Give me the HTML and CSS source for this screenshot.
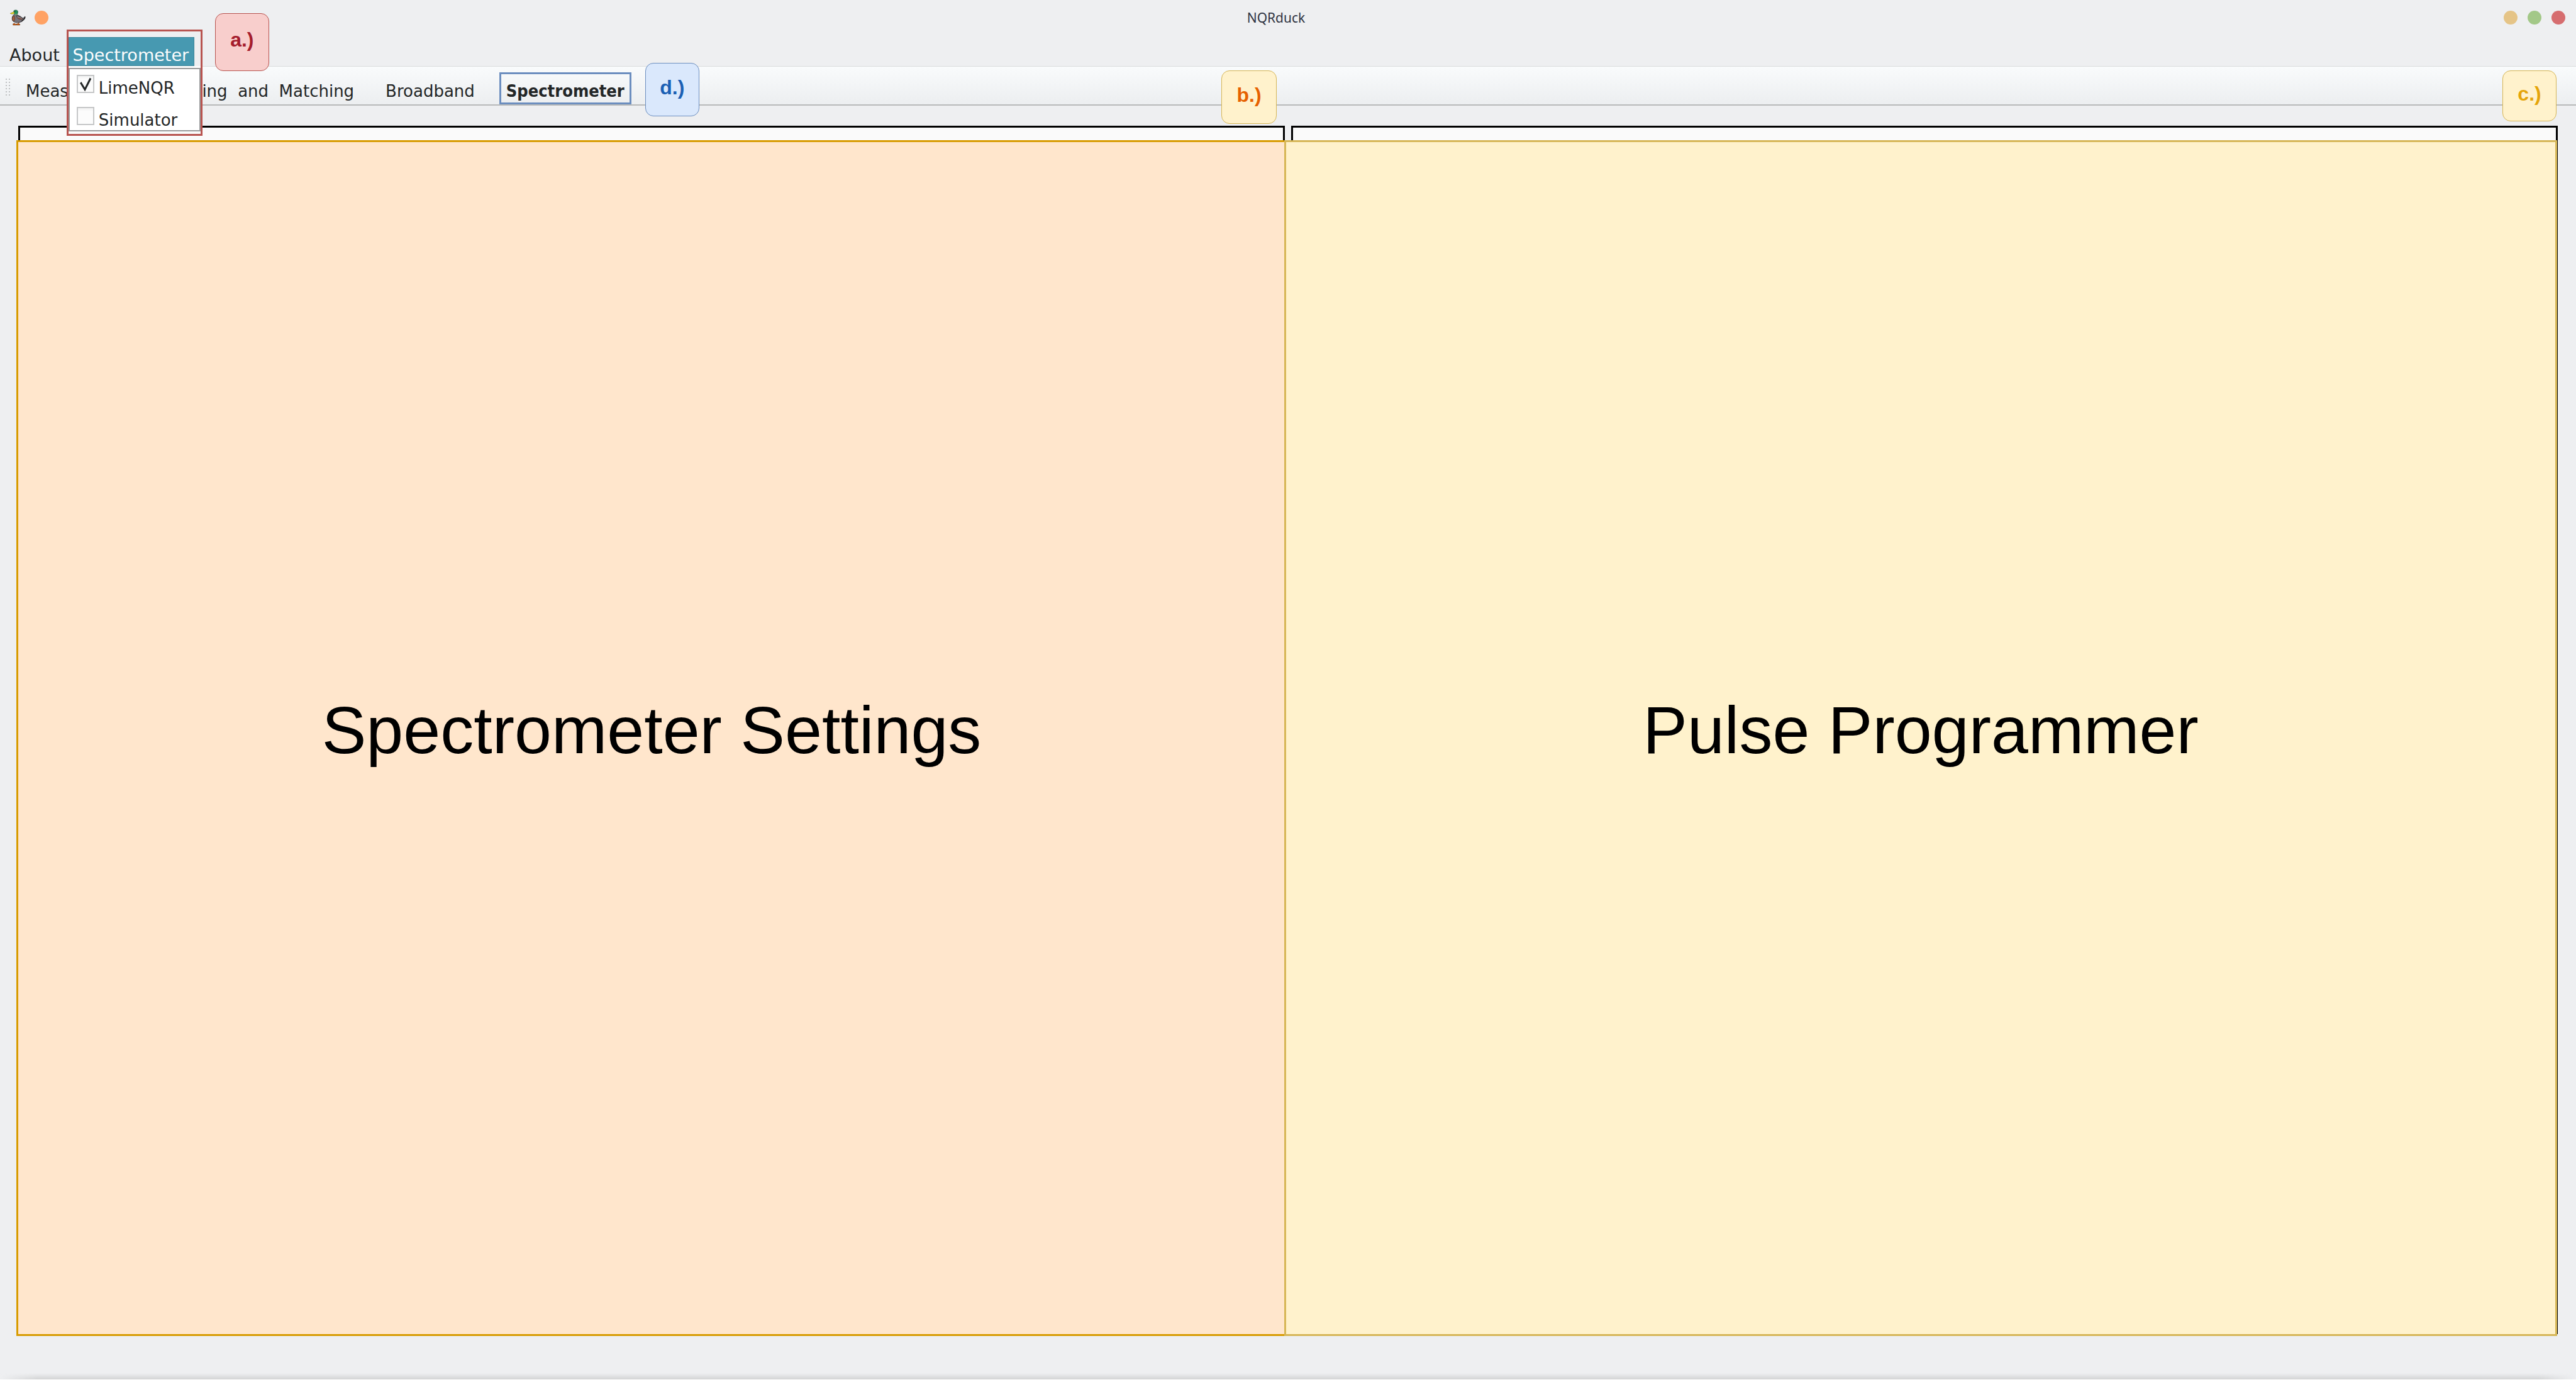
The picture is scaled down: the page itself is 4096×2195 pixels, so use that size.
FILE: index.html
```html
<!DOCTYPE html>
<html lang="en">
<head>
<meta charset="utf-8">
<title>NQRduck</title>
<link rel="stylesheet" href="styles.css">
</head>
<body>
<header class="titlebar">
  <svg class="duck" viewBox="84 82 144 144" aria-hidden="true">
    <path d="M128 204v10M165 200v14" stroke="#b8480e" stroke-width="8"/>
    <path d="M115 209q10-6 17 0l14 3v8h-30zM148 209q10-6 17 0l11 3v8h-28z" fill="#d95f0e" stroke="#4a2a14" stroke-width="3"/>
    <path d="M129 124C112 136 106 150 108 168C110 190 132 197 152 197C182 198 202 186 212 172C220 165 224 156 221 144C215 148 213 156 204 158C192 158 186 144 172 139L156 132Z" fill="#77737a" stroke="#2b292c" stroke-width="5"/>
    <path d="M126 137C110 145 107 160 110 174C112 182 122 187 128 182C133 168 132 150 126 137Z" fill="#a5613d" stroke="#4b2b1f" stroke-width="3"/>
    <path d="M146 137C148 158 164 172 199 170C207 160 190 152 178 148C164 143 154 140 146 137Z" fill="#8a8489" stroke="#38282a" stroke-width="4"/>
    <path d="M152 152C162 165 178 170 199 168C192 158 170 158 152 152Z" fill="#8b4a35"/>
    <path d="M221 146C219 162 205 176 190 186" fill="none" stroke="#202022" stroke-width="7"/>
    <path d="M122 94C130 85 156 85 158 100C161 110 154 116 154 128H128C130 116 120 108 122 94Z" fill="#23905a" stroke="#1d4934" stroke-width="4"/>
    <path d="M128 126H154" stroke="#d8e0c0" stroke-width="4"/>
    <path d="M123 103L91 117Q95 124 114 122Q126 122 127 111Z" fill="#f2e21c" stroke="#5d5a1c" stroke-width="3"/>
    <circle cx="133" cy="101" r="4" fill="#173226"/>
  </svg>
  <button class="dot dot-pin" type="button" aria-label="Keep on all desktops"></button>
  <h1 class="window-title">NQRduck</h1>
  <div class="window-buttons">
    <button class="dot dot-min" type="button" aria-label="Minimize"></button>
    <button class="dot dot-max" type="button" aria-label="Maximize"></button>
    <button class="dot dot-close" type="button" aria-label="Close"></button>
  </div>
</header>

<nav class="menubar">
  <button class="menu-button" type="button">About</button>
  <div class="menu">
    <button class="menu-button menu-open" type="button" aria-expanded="true">Spectrometer</button>
    <div class="popup">
      <div class="popup-list">
        <div class="option">
          <span class="tick">
            <input type="checkbox" id="lime" checked>
            <svg viewBox="0 0 28 28" aria-hidden="true"><path d="M6 14l1-1 6 10L22 5" fill="none" stroke="#232627" stroke-width="3"/></svg>
          </span>
          <label for="lime">LimeNQR</label>
        </div>
        <div class="option">
          <span class="tick">
            <input type="checkbox" id="simulator">
            <svg viewBox="0 0 28 28" aria-hidden="true"><path d="M6 14l1-1 6 10L22 5" fill="none" stroke="#232627" stroke-width="3"/></svg>
          </span>
          <label for="simulator">Simulator</label>
        </div>
      </div>
    </div>
    <div class="menu-outline"></div>
    <span class="badge badge-a">a.)</span>
  </div>
</nav>

<div class="toolbar">
  <div class="handle"></div>
  <button class="tool" type="button">Measurement</button>
  <button class="tool" type="button">Tuning  and  Matching</button>
  <button class="tool" type="button">Broadband</button>
  <div class="tool-current">
    <button class="tool tool-active" type="button">Spectrometer</button>
    <span class="badge badge-d">d.)</span>
  </div>
</div>

<main class="workspace">
  <div class="frames">
    <div class="frame"></div>
    <div class="frame"></div>
  </div>
  <div class="regions">
    <section class="region region-settings">
      <h2>Spectrometer Settings</h2>
      <span class="badge badge-b">b.)</span>
    </section>
    <section class="region region-pulse">
      <h2>Pulse Programmer</h2>
      <span class="badge badge-c">c.)</span>
    </section>
  </div>
</main>
<footer class="window-edge"></footer>
</body>
</html>
```
FILE: styles.css
```css
* {
  box-sizing: border-box;
}

body {
  margin: 0;
  min-height: 100vh;
  display: flex;
  flex-direction: column;
  background: #eeeff1;
  color: #232627;
  font-family: "DejaVu Sans", sans-serif;
  font-size: 26px;
  line-height: 32px;
}

button {
  margin: 0;
  border: 0;
  background: none;
  color: inherit;
  font: inherit;
}

/* Title bar */

.titlebar {
  display: flex;
  align-items: center;
  height: 56px;
  padding: 0 17px 0 15px;
}

.duck {
  width: 26px;
  height: 26px;
  margin-right: 14px;
}

.dot {
  width: 22px;
  height: 22px;
  padding: 0;
  border-radius: 50%;
}

.dot-pin { background: #ffa264; }
.dot-min { background: #e5c487; }
.dot-max { background: #a3c888; }
.dot-close { background: #d66d6f; }

.window-title {
  flex: 1;
  margin: 0;
  color: #2f3442;
  font-family: "Noto Sans", sans-serif;
  font-size: 21px;
  font-weight: 400;
  text-align: center;
}

.window-buttons {
  display: flex;
  gap: 16px;
}

/* Menu bar */

.menubar {
  display: flex;
  gap: 6px;
  padding: 3px 9px 0;
  font-size: 27px;
}

.menu-button {
  padding: 13px 8px 1px 6px;
}

.menu {
  position: relative;
}

.menu-open {
  min-width: 200px;
  background: #4799b1;
  box-shadow: inset 0 0 0 1px #3d8699;
  color: #fcfcfc;
}

.popup {
  position: absolute;
  z-index: 2;
  top: 46px;
  left: 0;
  width: 210px;
  padding: 3px 0 2px;
  background: #fcfcfc;
  font-size: 26px;
}

.popup-list {
  display: flex;
  flex-direction: column;
  gap: 14px;
  padding: 9px 11px 0;
  border: 2px solid #999b9c;
  background: #fff;
}

.option {
  display: flex;
  gap: 7px;
}

.option label {
  padding-top: 5px;
}

.tick {
  display: grid;
  width: 28px;
  height: 29px;
}

.tick input,
.tick svg {
  grid-area: 1 / 1;
  width: 100%;
  height: 100%;
  margin: 0;
}

.tick input {
  appearance: none;
  border: 2px solid #c6c7c8;
  background: linear-gradient(#f2f2f2, #fcfcfc 5px);
}

.tick svg {
  visibility: hidden;
  pointer-events: none;
}

.tick input:checked + svg {
  visibility: visible;
}

.menu-outline {
  position: absolute;
  z-index: 3;
  top: -12px;
  left: -3px;
  width: 216px;
  height: 169px;
  border: 3px solid #b85450;
  pointer-events: none;
}

/* Toolbar */

.toolbar {
  display: flex;
  gap: 28px;
  padding: 9px;
  padding-bottom: 0;
  border-top: 1px solid #dadcdc;
  border-bottom: 2px solid #b8baba;
  background: linear-gradient(#f9fbfc, #eceef0);
}

.handle {
  width: 7px;
  height: 30px;
  margin: 10px -14px 0 0;
  background: radial-gradient(circle at 1px 1px, #bfc1c2 1px, transparent 1px) 0 0 / 5px 5px;
}

.tool {
  padding: 11px 8px 2px;
  border: 3px solid transparent;
  white-space: pre;
}

.handle + .tool {
  margin-right: 7px;
}

.tool-current {
  position: relative;
}

.tool-active {
  border-color: #6c8ebf;
  font-family: "DejaVu Sans Condensed", "DejaVu Sans Mono", monospace;
  font-size: 27px;
  font-weight: 700;
}

/* Lettered callouts */

.badge {
  position: absolute;
  z-index: 4;
  display: flex;
  align-items: center;
  justify-content: center;
  width: 86px;
  height: 85px;
  padding-bottom: 7px;
  border: 1px solid #d6b656;
  border-radius: 13px;
  background: #fff2cc;
  font: 700 32px "Liberation Sans", Arial, sans-serif;
}

.badge-a {
  top: -38px;
  left: 233px;
  height: 92px;
  border-color: #b85450;
  background: #f8cecc;
  color: #a51d2d;
}

.badge-b {
  top: -114px;
  right: 13px;
  width: 88px;
  color: #e66100;
}

.badge-c {
  top: -114px;
  right: -2px;
  height: 81px;
  color: #e5a50a;
}

.badge-d {
  top: -15px;
  left: 232px;
  border-color: #6c8ebf;
  background: #dae8fc;
  color: #1a5fb4;
}

/* Work area */

.workspace {
  flex: 1;
  display: grid;
  padding-top: 32px;
}

.frames,
.regions {
  grid-area: 1 / 1;
  display: grid;
  grid-template-columns: 1fr 1fr;
}

.frames {
  gap: 10px;
  padding: 0 29px 3px;
}

.frame {
  border: 3px solid #000;
  background: #fafafa;
}

.regions {
  padding: 23px 30px 0 26px;
}

.region {
  position: relative;
  display: flex;
  align-items: center;
  justify-content: center;
  padding-bottom: 26px;
  border: 3px solid;
  color: #000;
}

.region h2 {
  margin: 0;
  font: 400 106px "Liberation Sans", Arial, sans-serif;
}

.region-settings {
  border-color: #d79b00;
  background: #ffe6cc;
}

.region-pulse {
  margin-left: -4px;
  border-color: #d6b656;
  background: #fff2cc;
}

/* Shadow along the bottom edge of the window */

.window-edge {
  height: 11px;
  margin-top: 59px;
  border-bottom: 1px solid #fff;
  background:
    linear-gradient(90deg, #eeeff1, transparent 60px calc(100% - 60px), #eeeff1),
    linear-gradient(#eeeff1, #d3d4d5);
}
```
